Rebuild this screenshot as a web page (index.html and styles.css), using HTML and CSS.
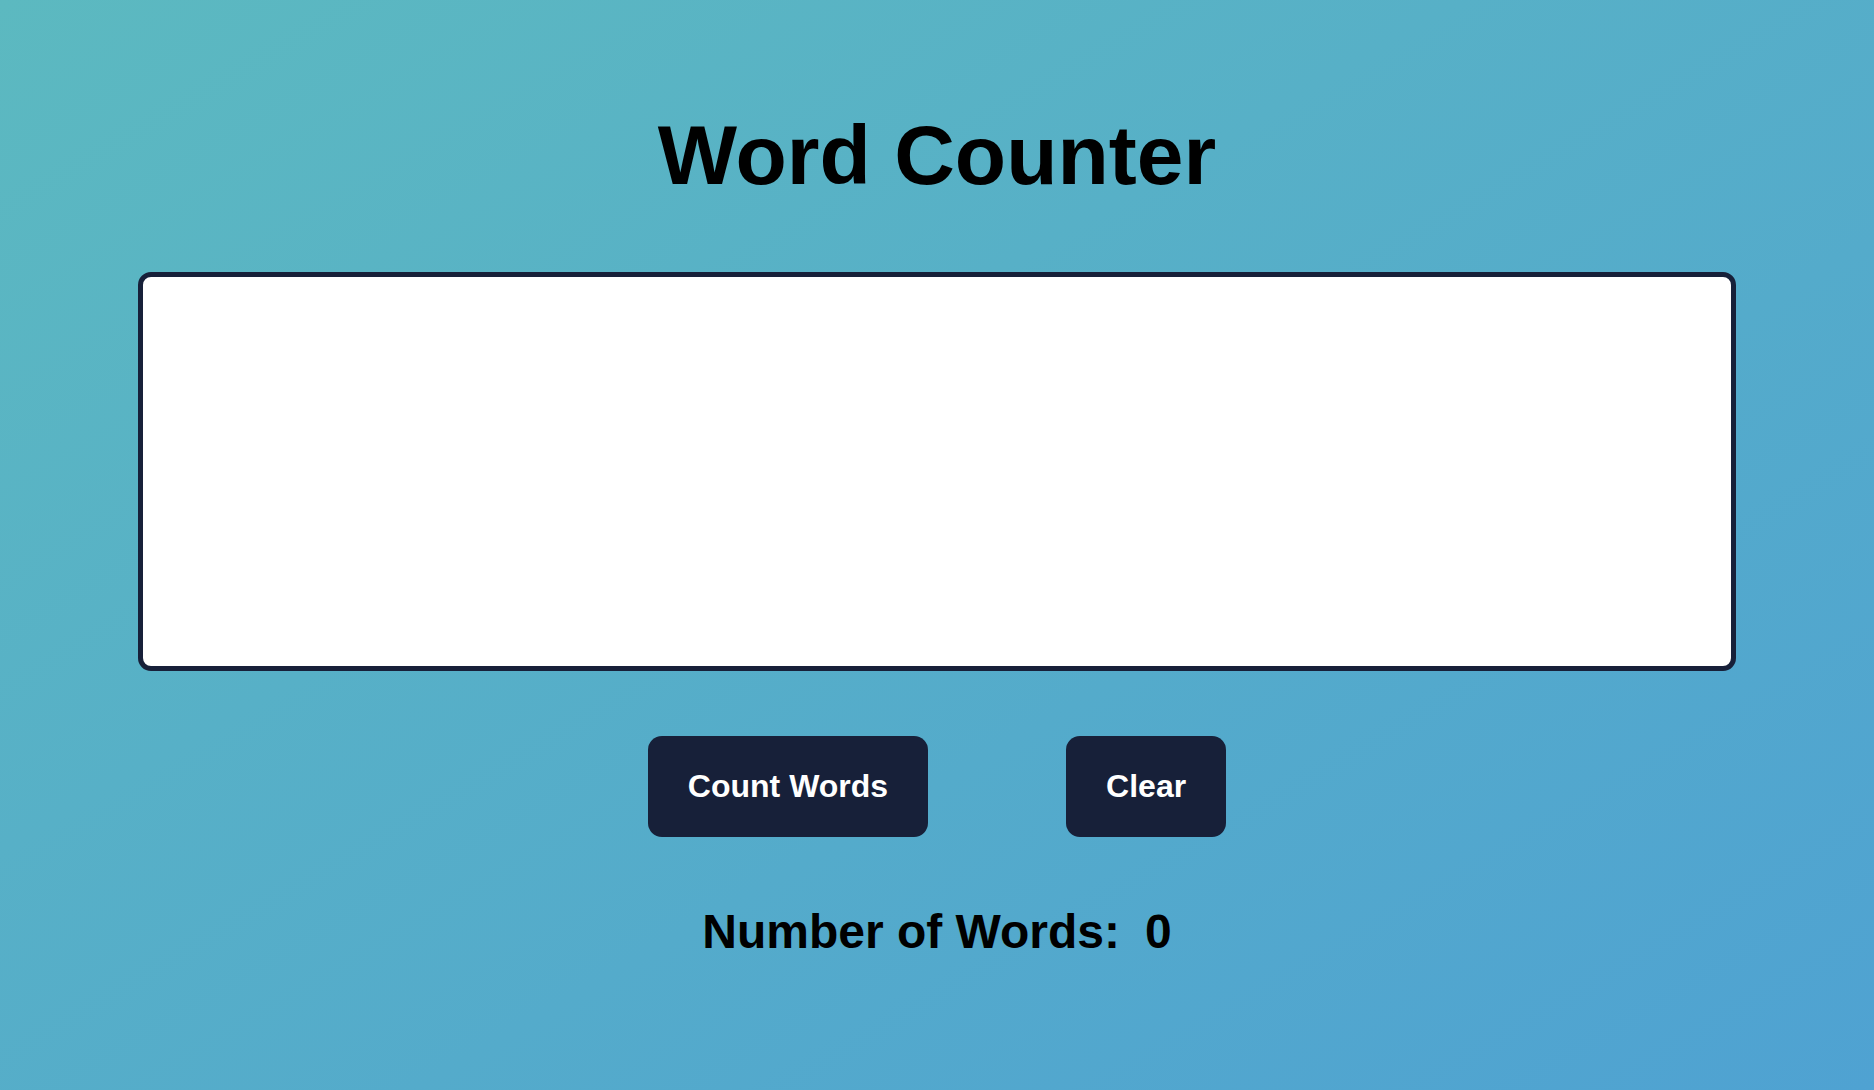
FILE: index.html
```html
<!DOCTYPE html>
<html lang="en">
<head>
<meta charset="utf-8">
<title>Word Counter</title>
<link rel="stylesheet" href="styles.css">
</head>
<body>
<main class="app">
  <h1 class="title">Word Counter</h1>
  <textarea class="input" aria-label="Text"></textarea>
  <div class="actions">
    <button class="btn" type="button">Count Words</button>
    <button class="btn" type="button">Clear</button>
  </div>
  <p class="result">Number of Words:<span class="count">0</span></p>
</main>
</body>
</html>
```

FILE: styles.css
```css
html, body {
  margin: 0;
  padding: 0;
  height: 100%;
}

body {
  background: linear-gradient(to bottom right, #5cb9c0, #4fa2d2);
  font-family: "Liberation Sans", Arial, Helvetica, sans-serif;
  color: #000;
  overflow: hidden;
}

.app {
  display: flex;
  flex-direction: column;
  align-items: center;
  padding-top: 107px;
}

.title {
  margin: 0;
  font-size: 84px;
  line-height: 96px;
  font-weight: 700;
}

.input {
  box-sizing: border-box;
  display: block;
  margin-top: 69px;
  width: 1598px;
  height: 399px;
  border: 5px solid #172039;
  border-radius: 13px;
  background: #fff;
  resize: none;
  outline: none;
  padding: 12px;
  font-family: "Liberation Sans", Arial, sans-serif;
  font-size: 20px;
}

.actions {
  display: flex;
  gap: 138px;
  margin-top: 65px;
}

.btn {
  box-sizing: border-box;
  height: 101px;
  padding: 0 40px;
  border: none;
  border-radius: 14px;
  background: #172039;
  color: #fff;
  font-family: "Liberation Sans", Arial, sans-serif;
  font-size: 32px;
  font-weight: 700;
  line-height: 37px;
  cursor: pointer;
}

.result {
  margin: 67px 0 0;
  font-size: 48px;
  font-weight: 700;
}

.count {
  margin-left: 25px;
}
```
